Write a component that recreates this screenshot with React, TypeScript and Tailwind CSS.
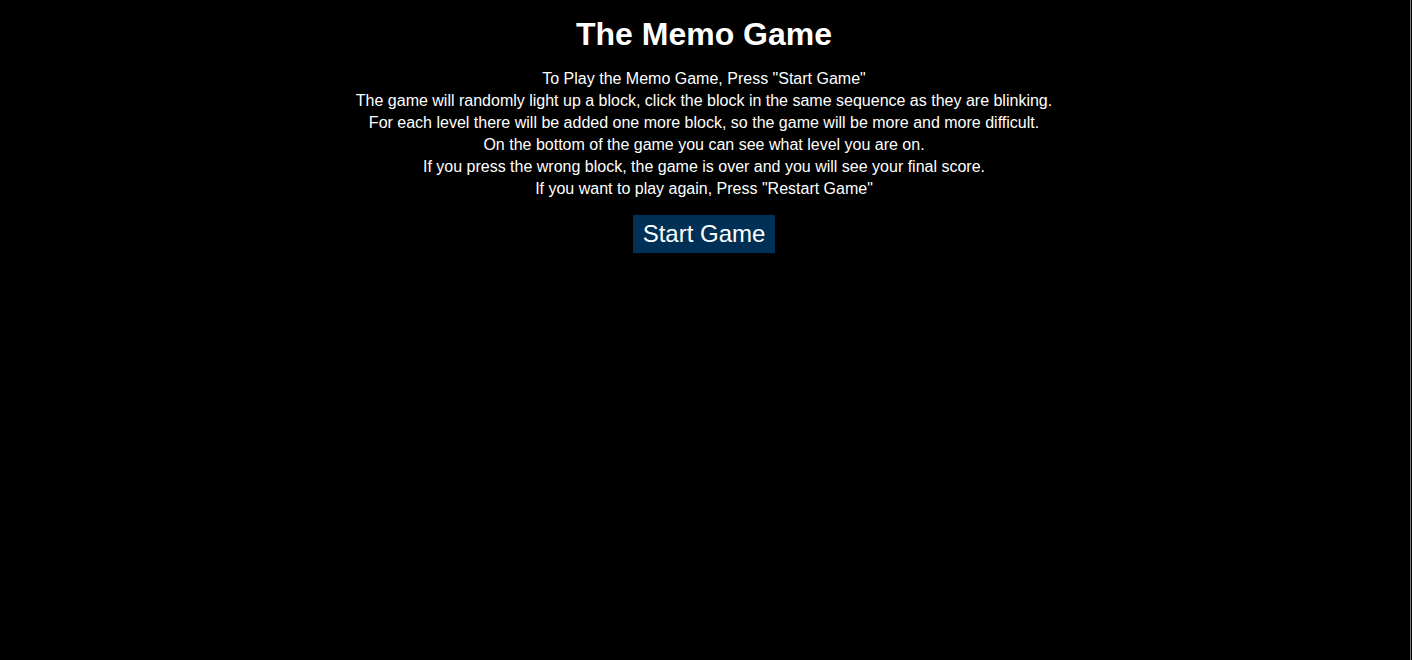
export default function App() {
  const lines = [
    'To Play the Memo Game, Press "Start Game"',
    "The game will randomly light up a block, click the block in the same sequence as they are blinking.",
    "For each level there will be added one more block, so the game will be more and more difficult.",
    "On the bottom of the game you can see what level you are on.",
    "If you press the wrong block, the game is over and you will see your final score.",
    'If you want to play again, Press "Restart Game"',
  ];

  return (
    <div className="flex h-[660px] w-full bg-white">
      <div className="flex-1 bg-black pr-[2px] text-white font-['Liberation_Sans',Arial,sans-serif] text-center">
        <h1 className="pt-[14px] text-[32px] leading-[40px] font-bold">The Memo Game</h1>
        <div className="mt-[14px] text-[16px] leading-[22px]">
          {lines.map((l) => (
            <p key={l}>{l}</p>
          ))}
        </div>
        <button className="mt-[15px] h-[38px] w-[142px] bg-[#003056] text-[24px] text-white">
          Start Game
        </button>
      </div>
      <div className="w-[1px] bg-[#777]" />
      <div className="w-[1px] bg-black" />
    </div>
  );
}
